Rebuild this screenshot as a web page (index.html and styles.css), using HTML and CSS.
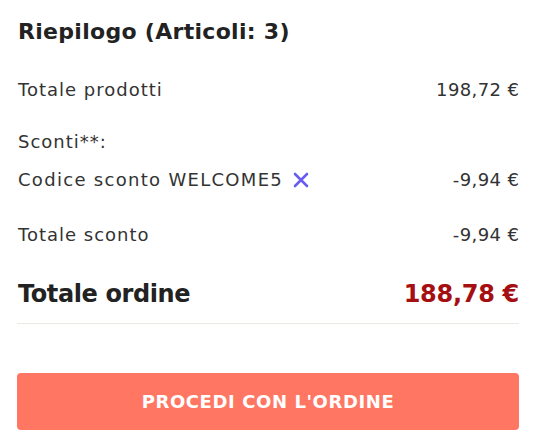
FILE: index.html
```html
<!DOCTYPE html>
<html>
<head>
	<meta charset="utf-8">
	<title>Riepilogo</title>
	<link rel="stylesheet" href="styles.css">
</head>
<body>
<div class="summary">
	<h2 class="summary-title">Riepilogo (Articoli: 3)</h2>
	<div class="row">
		<span class="name">Totale prodotti</span>
		<span class="amount">198,72 €</span>
	</div>
	<div class="label">Sconti**:</div>
	<div class="row code-row">
		<span class="name code">Codice sconto WELCOME5
			<svg class="remove" width="16" height="16" viewBox="0 0 16 16"><path d="M2 2L14 14M14 2L2 14" stroke="#6a5cf0" stroke-width="2.6" stroke-linecap="round"/></svg>
		</span>
		<span class="amount">-9,94 €</span>
	</div>
	<div class="row sconto-row">
		<span class="name">Totale sconto</span>
		<span class="amount">-9,94 €</span>
	</div>
	<div class="row total">
		<span class="name">Totale ordine</span>
		<span class="price">188,78 €</span>
	</div>
	<button class="btn-order">PROCEDI CON L'ORDINE</button>
</div>
</body>
</html>
```
FILE: styles.css
```css
body{
	margin: 0;
	background: #fff;
	font-family: "DejaVu Sans", "Open Sans", sans-serif;
	color: #333;
}
.summary{
	padding: 17px 20px 0 17px;
	display: flex;
	flex-direction: column;
}
.summary-title{
	margin: 0 0 32px 1px;
	font-size: 22px;
	font-weight: bold;
	color: #222;
	line-height: 30px;
	letter-spacing: 0.3px;
}
.row{
	display: flex;
	justify-content: space-between;
	align-items: center;
	font-size: 18px;
	line-height: 22px;
	padding-left: 1px;
}
.row .name{
	letter-spacing: 1px;
}
.row .amount{
	letter-spacing: 0.4px;
	margin-right: -0.4px;
}
.label{
	margin-top: 30px;
	font-size: 18px;
	line-height: 22px;
	padding-left: 1px;
	letter-spacing: 1px;
}
.code-row{
	margin-top: 16px;
}
.row .code{
	display: flex;
	align-items: center;
	gap: 10px;
	letter-spacing: 1.3px;
}
.sconto-row{
	margin-top: 33px;
}
.row.total{
	margin-top: 33px;
	padding-bottom: 14px;
	border-bottom: 1px solid #ece8e3;
	font-size: 24px;
	font-weight: bold;
	color: #222;
	line-height: 30px;
}
.row.total .name{
	letter-spacing: -0.4px;
}
.price{
	color: #a50f12;
	letter-spacing: -0.3px;
}
.btn-order{
	margin-top: 49px;
	height: 57px;
	border: none;
	border-radius: 4px;
	background: #ff7663;
	color: #fff;
	font-family: inherit;
	font-size: 18px;
	font-weight: bold;
	letter-spacing: 0.6px;
}
```
